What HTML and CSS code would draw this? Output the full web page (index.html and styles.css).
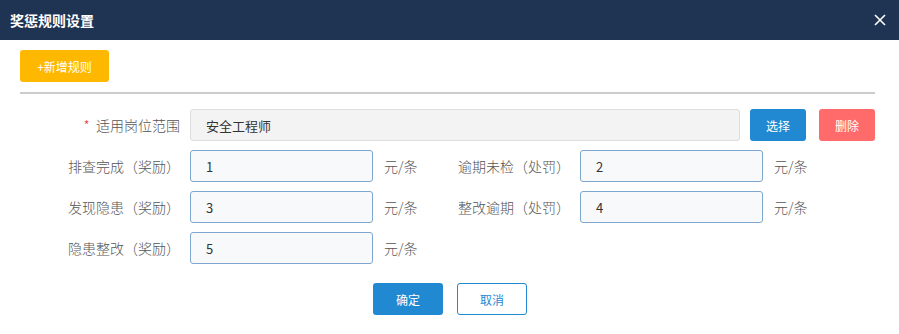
FILE: index.html
```html
<!DOCTYPE html>
<html>
<head>
<meta charset="utf-8">
<title>奖惩规则设置</title>
<link rel="stylesheet" href="styles.css">
</head>
<body>
<div class="dialog">
  <div class="dialog-header">
    <span class="dialog-title">奖惩规则设置</span>
    <span class="dialog-close">
      <svg width="12" height="12" viewBox="0 0 12 12"><path d="M1 1L11 11M11 1L1 11" stroke="#fff" stroke-width="1.6" fill="none"/></svg>
    </span>
  </div>
  <div class="dialog-body">
    <div class="toolbar">
      <button class="btn btn-add">+新增规则</button>
    </div>
    <div class="divider"></div>

    <div class="rule-row">
      <label class="field-label"><span class="required">*</span>&nbsp;&nbsp;适用岗位范围</label>
      <input class="field-input readonly" type="text" value="安全工程师" readonly>
      <button class="btn btn-select">选择</button>
      <button class="btn btn-delete">删除</button>
    </div>

    <div class="grid">
      <label class="field-label">排查完成（奖励）</label>
      <input class="field-input" type="text" value="1">
      <span class="unit">元/条</span>
      <label class="field-label">逾期未检（处罚）</label>
      <input class="field-input" type="text" value="2">
      <span class="unit">元/条</span>

      <label class="field-label">发现隐患（奖励）</label>
      <input class="field-input" type="text" value="3">
      <span class="unit">元/条</span>
      <label class="field-label">整改逾期（处罚）</label>
      <input class="field-input" type="text" value="4">
      <span class="unit">元/条</span>

      <label class="field-label">隐患整改（奖励）</label>
      <input class="field-input" type="text" value="5">
      <span class="unit">元/条</span>
    </div>

    <div class="footer">
      <button class="btn btn-ok">确定</button>
      <button class="btn btn-cancel">取消</button>
    </div>
  </div>
</div>
</body>
</html>
```

FILE: styles.css
```css
body {
  margin: 0;
  background: #ffffff;
  font-family: "Noto Sans CJK SC", "Noto Sans", sans-serif;
  color: #555555;
  overflow: hidden;
}

.dialog {
  width: 899px;
}

.dialog-header {
  height: 40px;
  background: #1f3352;
  display: flex;
  align-items: center;
  justify-content: space-between;
  padding: 0 13px 0 10px;
}

.dialog-title {
  color: #ffffff;
  font-size: 14px;
  font-weight: bold;
}

.dialog-close {
  display: flex;
  align-items: center;
}

.dialog-body {
  padding: 10px 24px 0 20px;
}

.btn {
  border: 0;
  border-radius: 3px;
  font-family: inherit;
  font-size: 12px;
  color: #ffffff;
  height: 32px;
  padding: 0;
  cursor: pointer;
}

.btn-add {
  width: 89px;
  background: #ffb800;
}

.divider {
  margin-top: 10px;
  height: 2px;
  background: #cccccc;
}

.rule-row {
  display: flex;
  align-items: center;
  margin-top: 15px;
}

.field-label {
  width: 160px;
  margin-right: 10px;
  text-align: right;
  font-size: 14px;
  font-weight: 300;
  color: #555555;
}

.required {
  color: #e4393c;
}

.field-input {
  box-sizing: border-box;
  height: 32px;
  border: 1px solid #7ea7cf;
  border-radius: 3px;
  background: #f8f9fb;
  padding: 0 15px;
  font-family: inherit;
  font-size: 13px;
  color: #333333;
  outline: none;
}

.field-input.readonly {
  width: 550px;
  background: #f3f3f3;
  border-color: #dddddd;
}

.btn-select {
  width: 56px;
  margin-left: 10px;
  background: #2089d2;
}

.btn-delete {
  width: 56px;
  margin-left: 13px;
  background: #ff6b6b;
}

.grid {
  display: grid;
  grid-template-columns: 170px 183px 37px 170px 183px 37px;
  row-gap: 9px;
  margin-top: 9px;
  align-items: center;
}

.grid .field-input {
  width: 183px;
}

.unit {
  padding-left: 11px;
  font-size: 14px;
  font-weight: 300;
  color: #555555;
  white-space: nowrap;
}

.footer {
  display: flex;
  justify-content: center;
  gap: 14px;
  margin-top: 19px;
  padding-left: 5px;
}

.btn-ok {
  width: 70px;
  background: #2089d2;
}

.btn-cancel {
  width: 70px;
  box-sizing: border-box;
  background: #ffffff;
  border: 1px solid #2089d2;
  color: #2089d2;
}
```
